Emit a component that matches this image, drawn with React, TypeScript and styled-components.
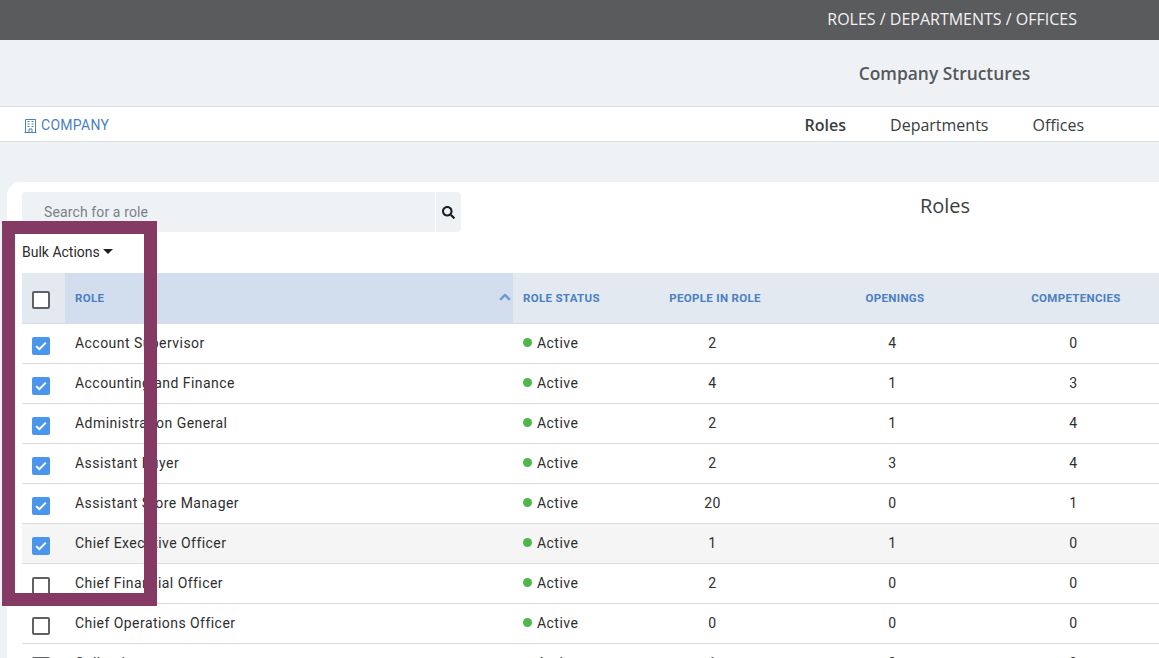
import styled, { createGlobalStyle } from "styled-components";
import { FaSearch, FaChevronUp } from "react-icons/fa";

const GlobalStyle = createGlobalStyle`
  html, body {
    margin: 0;
    padding: 0;
    height: 658px;
    overflow: hidden;
    background: #eef2f5;
    font-family: "Roboto", "Liberation Sans", sans-serif;
    color: #2b2b2b;
  }
`;

const Page = styled.div`
  position: relative;
  width: 1159px;
  height: 658px;
  overflow: hidden;
`;

const TopBar = styled.div`
  height: 40px;
  background: #5a5b5d;
  display: flex;
  align-items: center;
  justify-content: flex-end;
  padding: 0 82px 2px 0;
  box-sizing: border-box;
  color: #f3f3f3;
  font: 400 16px "Open Sans", sans-serif;
`;

const TitleBand = styled.div`
  height: 66px;
  display: flex;
  align-items: center;
  justify-content: flex-end;
  padding-bottom: 1px;
  box-sizing: border-box;
  font: 600 17.4px "Open Sans", sans-serif;
  color: #55585b;
`;

const TitleText = styled.div`
  width: 429px;
  text-align: center;
`;

const SubNav = styled.div`
  height: 32px;
  background: #fff;
  border-top: 1px solid #dcdfe2;
  border-bottom: 1px solid #dcdfe2;
  display: flex;
  align-items: center;
  padding: 2px 75px 0 24px;
`;

const CompanyLink = styled.a`
  display: flex;
  align-items: center;
  gap: 4px;
  color: #4a7fc1;
  font: 400 14px "Roboto", sans-serif;
  letter-spacing: 0.3px;
  margin-right: auto;
`;

const Tabs = styled.div`
  display: flex;
  gap: 44px;
`;

const Tab = styled.div<{ $active?: boolean }>`
  font: ${(p) => (p.$active ? 600 : 400)} 16px "Open Sans", sans-serif;
  color: #3a3d40;
`;

const Card = styled.div`
  margin: 40px 0 0 7px;
  background: #fff;
  border-radius: 14px 0 0 0;
  padding: 10px 0 0 15px;
  height: 600px;
`;

const TopRow = styled.div`
  display: flex;
  height: 40px;
`;

const SearchBox = styled.div`
  width: 413px;
  background: #eef2f5;
  border-radius: 4px 0 0 4px;
  padding: 12px 0 0 22px;
  box-sizing: border-box;
  color: #7b7f86;
  font-size: 14px;
  line-height: 16px;
  letter-spacing: 0.12px;
`;

const SearchButton = styled.div`
  width: 25px;
  margin-left: 1px;
  background: #eef2f5;
  border-radius: 0 4px 4px 0;
  display: flex;
  align-items: center;
  justify-content: center;
  color: #1c1c1c;
  font-size: 13px;
`;

const CardTitle = styled.div`
  margin-left: 424px;
  width: 120px;
  text-align: center;
  font: 400 20px/28px "Open Sans", sans-serif;
  color: #3a3d40;
`;

const BulkActions = styled.div`
  height: 41px;
  padding-bottom: 2px;
  box-sizing: border-box;
  display: flex;
  align-items: center;
  gap: 3px;
  font-size: 14px;
  color: #2b2b2b;
`;

const Caret = styled.span`
  width: 0;
  height: 0;
  margin-top: -1px;
  border-left: 5px solid transparent;
  border-right: 5px solid transparent;
  border-top: 5px solid #1f1f1f;
`;

const Table = styled.table`
  width: 1145px;
  table-layout: fixed;
  border-collapse: collapse;
`;

const HeadRow = styled.tr`
  height: 50px;
  background: #e2e9f1;
  border-bottom: 1px solid #d8dcdf;
`;

const HeadCell = styled.th<{ $sorted?: boolean; $align?: string }>`
  padding: 0 ${(p) => (p.$align === "left" ? "10px" : "0")};
  position: relative;
  background: ${(p) => (p.$sorted ? "#d2deee" : "transparent")};
  color: #4a7fc1;
  font-size: 11.5px;
  font-weight: 700;
  letter-spacing: 0.32px;
  text-align: ${(p) => p.$align || "center"};
`;

const SortIcon = styled.span`
  position: absolute;
  right: 2px;
  top: 18px;
  font-size: 12px;
  color: #6d97cc;
  & svg {
    stroke: currentColor;
    stroke-width: 30px;
  }
`;

const Row = styled.tr<{ $hover?: boolean }>`
  height: 40px;
  background: ${(p) => (p.$hover ? "#f5f5f5" : "#fff")};
  border-bottom: 1px solid #dcdcdc;
`;

const Cell = styled.td<{ $align?: string }>`
  padding: ${(p) => (p.$align === "left" ? "0 0 1px 10px" : "0 5px 1px 0")};
  font-size: 14px;
  letter-spacing: 0.45px;
  color: #2e2e2e;
  text-align: ${(p) => p.$align || "center"};
`;

const CheckCell = styled.td`
  padding: 5px 0 0 10px;
`;

const HeadCheckCell = styled.th`
  padding: 4px 0 0 10px;
  text-align: left;
`;

const Box = styled.span<{ $checked?: boolean }>`
  display: flex;
  align-items: center;
  justify-content: center;
  width: 18px;
  height: 18px;
  box-sizing: border-box;
  border-radius: 2px;
  border: ${(p) => (p.$checked ? "none" : "2px solid #5f6165")};
  background: ${(p) => (p.$checked ? "#4a96ec" : "#fff")};
`;

const Status = styled.span`
  display: inline-flex;
  align-items: center;
  gap: 5px;
`;

const Dot = styled.span`
  width: 9px;
  height: 9px;
  border-radius: 50%;
  background: #4fb648;
`;

const Highlight = styled.div`
  position: absolute;
  left: 2px;
  top: 221px;
  width: 155px;
  height: 385px;
  box-sizing: border-box;
  border: 13px solid #843a62;
  pointer-events: none;
`;

const BuildingIcon = () => (
  <svg width="13" height="15" viewBox="0 0 13 15" fill="none" stroke="#4a7fc1" strokeWidth="1">
    <path d="M1.5 14V1.5h10V14M0.5 14.5h12" />
    <path d="M3.5 3.5h2M7.5 3.5h2M3.5 6h2M7.5 6h2M3.5 8.5h2M7.5 8.5h2M5 14v-3h3v3" />
  </svg>
);

const Tick = () => (
  <svg width="12" height="10" viewBox="0 0 12 10" fill="none" stroke="#fff" strokeWidth="2">
    <path d="M1.2 5.2 4.4 8.2 10.8 1.6" />
  </svg>
);

type Role = { name: string; people: number; openings: number; comps: number; checked?: boolean; hover?: boolean };

const roles: Role[] = [
  { name: "Account Supervisor", people: 2, openings: 4, comps: 0, checked: true },
  { name: "Accounting and Finance", people: 4, openings: 1, comps: 3, checked: true },
  { name: "Administration General", people: 2, openings: 1, comps: 4, checked: true },
  { name: "Assistant Buyer", people: 2, openings: 3, comps: 4, checked: true },
  { name: "Assistant Store Manager", people: 20, openings: 0, comps: 1, checked: true },
  { name: "Chief Executive Officer", people: 1, openings: 1, comps: 0, checked: true, hover: true },
  { name: "Chief Financial Officer", people: 2, openings: 0, comps: 0 },
  { name: "Chief Operations Officer", people: 0, openings: 0, comps: 0 },
  { name: "Collections", people: 1, openings: 0, comps: 0 },
];

export default function App() {
  return (
    <Page>
      <GlobalStyle />
      <TopBar>ROLES / DEPARTMENTS / OFFICES</TopBar>
      <TitleBand>
        <TitleText>Company Structures</TitleText>
      </TitleBand>
      <SubNav>
        <CompanyLink>
          <BuildingIcon />
          COMPANY
        </CompanyLink>
        <Tabs>
          <Tab $active>Roles</Tab>
          <Tab>Departments</Tab>
          <Tab>Offices</Tab>
        </Tabs>
      </SubNav>
      <Card>
        <TopRow>
          <SearchBox>Search for a role</SearchBox>
          <SearchButton>
            <FaSearch />
          </SearchButton>
          <CardTitle>Roles</CardTitle>
        </TopRow>
        <BulkActions>
          Bulk Actions <Caret />
        </BulkActions>
        <Table>
          <colgroup>
            <col style={{ width: 43 }} />
            <col style={{ width: 448 }} />
            <col style={{ width: 112 }} />
            <col style={{ width: 180 }} />
            <col style={{ width: 180 }} />
            <col style={{ width: 182 }} />
          </colgroup>
          <thead>
            <HeadRow>
              <HeadCheckCell>
                <Box />
              </HeadCheckCell>
              <HeadCell $sorted $align="left">
                ROLE
                <SortIcon>
                  <FaChevronUp />
                </SortIcon>
              </HeadCell>
              <HeadCell $align="left">ROLE STATUS</HeadCell>
              <HeadCell>PEOPLE IN ROLE</HeadCell>
              <HeadCell>OPENINGS</HeadCell>
              <HeadCell>COMPETENCIES</HeadCell>
            </HeadRow>
          </thead>
          <tbody>
            {roles.map((r) => (
              <Row key={r.name} $hover={r.hover}>
                <CheckCell>
                  <Box $checked={r.checked}>{r.checked && <Tick />}</Box>
                </CheckCell>
                <Cell $align="left">{r.name}</Cell>
                <Cell $align="left">
                  <Status>
                    <Dot />
                    Active
                  </Status>
                </Cell>
                <Cell>{r.people}</Cell>
                <Cell>{r.openings}</Cell>
                <Cell>{r.comps}</Cell>
              </Row>
            ))}
          </tbody>
        </Table>
      </Card>
      <Highlight />
    </Page>
  );
}
